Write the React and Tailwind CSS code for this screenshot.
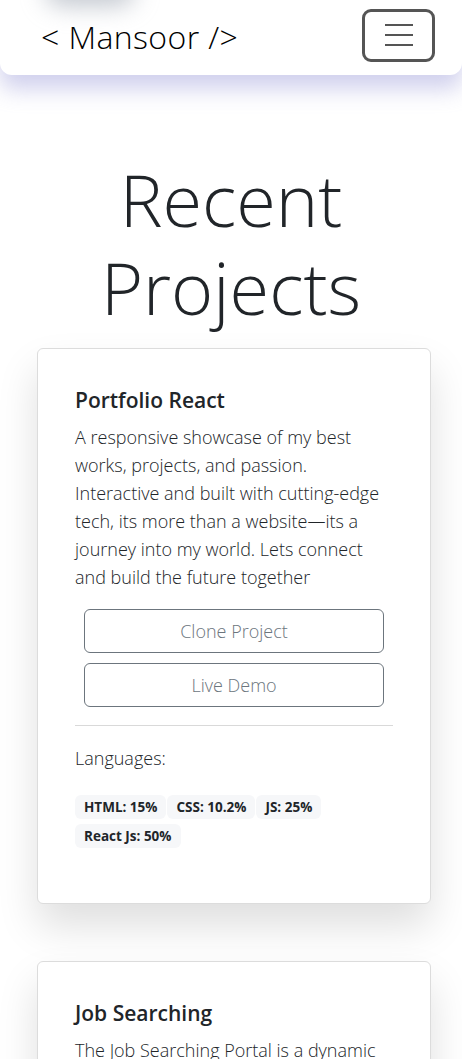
const projects = [
  {
    title: 'Portfolio React',
    description:
      'A responsive showcase of my best works, projects, and passion. Interactive and built with cutting-edge tech, its more than a website\u2014its a journey into my world. Lets connect and build the future together',
    languages: ['HTML: 15%', 'CSS: 10.2%', 'JS: 25%', 'React Js: 50%'],
  },
  {
    title: 'Job Searching',
    description:
      'The Job Searching Portal is a dynamic platform that connects job seekers with employers, making the hiring process simple and fast.',
    languages: ['HTML: 20%', 'CSS: 15%', 'JS: 65%'],
  },
];

function Navbar() {
  return (
    <nav className="relative z-10 flex h-[75px] items-center justify-between rounded-b-xl bg-white pl-[41px] pr-[27px] shadow-[0_14px_22px_rgba(150,150,215,0.45)]">
      <div className="pointer-events-none absolute left-[45px] top-[-28px] h-[34px] w-[90px] rounded-full bg-gray-400/60 blur-md" />
      <span className="mb-[2px] text-[32px] font-light leading-none tracking-[0.4px] text-black">&lt; Mansoor /&gt;</span>
      <button className="mb-[5px] flex h-[53px] w-[73px] flex-col items-center justify-center gap-[8px] rounded-[9px] border-[3px] border-[#555]">
        <span className="h-[2px] w-[28px] bg-[#555]" />
        <span className="h-[2px] w-[28px] bg-[#555]" />
        <span className="h-[2px] w-[28px] bg-[#555]" />
      </button>
    </nav>
  );
}

function ProjectCard({ project }) {
  return (
    <div className="rounded-md border border-[#dcdcdc] bg-white px-[37px] pb-[55px] pt-[36px] shadow-[0_22px_40px_rgba(0,0,0,0.13)]">
      <h3 className="text-[21px] font-semibold leading-[30px] text-[#212529]">{project.title}</h3>
      <p className="mt-[8px] text-[18px] font-light leading-[28px] text-[#212529]">{project.description}</p>
      <div className="mt-[18px] flex flex-col items-center gap-[10px]">
        <button className="h-[44px] w-[300px] rounded-md border border-[#6c757d] text-[18px] font-light text-[#6c757d]">
          Clone Project
        </button>
        <button className="h-[44px] w-[300px] rounded-md border border-[#6c757d] text-[18px] font-light text-[#6c757d]">
          Live Demo
        </button>
      </div>
      <hr className="mt-[18px] border-[#d9d9d9]" />
      <p className="mt-[18px] text-[18px] font-light leading-[28px] text-[#212529]">Languages:</p>
      <div className="mt-[23px] flex flex-wrap gap-x-[1px] gap-y-[5px]">
        {project.languages.map((lang) => (
          <span
            key={lang}
            className="rounded-md bg-[#f6f7f9] px-[9px] py-[3px] text-[13.5px] font-bold leading-[18px] text-[#212529]"
          >
            {lang}
          </span>
        ))}
      </div>
    </div>
  );
}

export default function App() {
  return (
    <div
      className="min-h-screen overflow-hidden bg-white"
      style={{ fontFamily: '"Segoe UI", "Open Sans", "Noto Sans", sans-serif' }}
    >
      <Navbar />
      <h1 className="mt-[80px] text-center text-[72px] font-light leading-[88px] text-[#212529]">
        Recent Projects
      </h1>
      <div className="mt-[17px] flex flex-col gap-[57px] pl-[37px] pr-[31px]">
        {projects.map((p) => (
          <ProjectCard key={p.title} project={p} />
        ))}
      </div>
    </div>
  );
}
